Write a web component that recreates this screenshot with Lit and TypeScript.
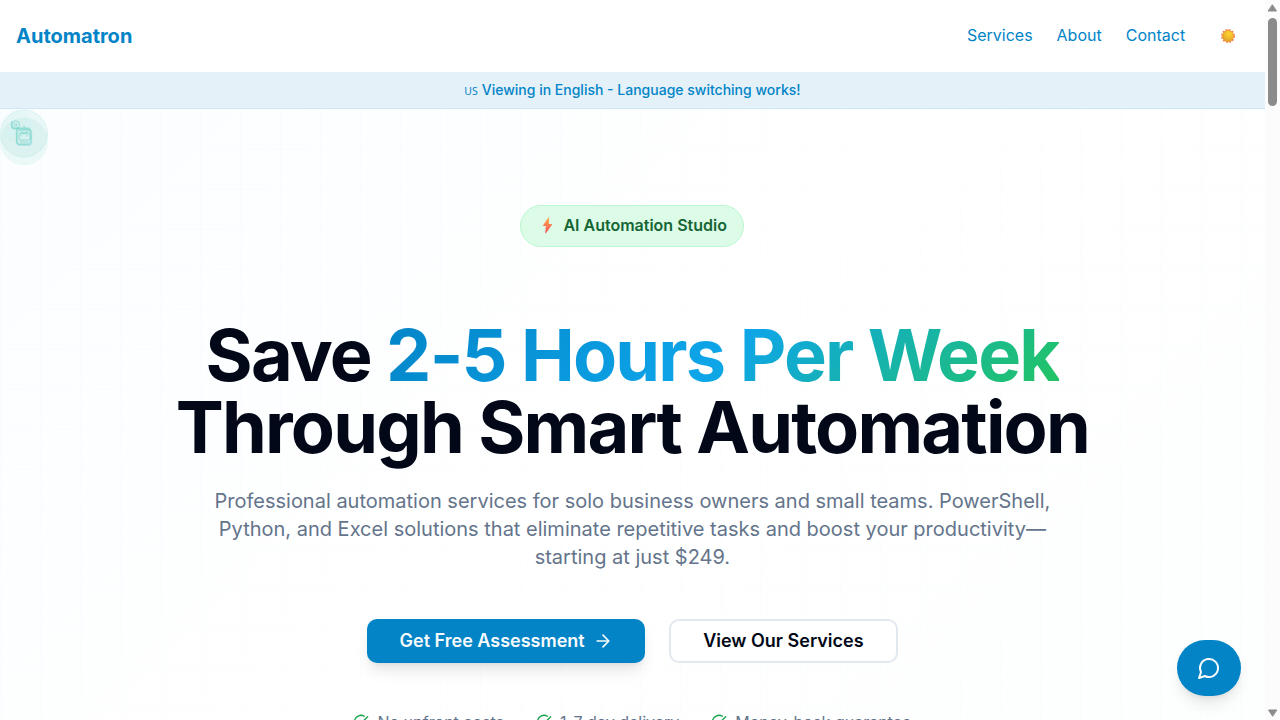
import { LitElement, html, css } from "lit";
import { customElement } from "lit/decorators.js";

@customElement("app-root")
export class AppRoot extends LitElement {
  static styles = css`
    :host { display: flex; width: 1280px; height: 720px; overflow: hidden; background: #fff; color: #020817; font-family: Inter, sans-serif; font-size: 16px; line-height: 24px; }
    * { box-sizing: border-box; }
    svg { display: block; fill: none; stroke: currentColor; stroke-width: 2; stroke-linecap: round; stroke-linejoin: round; flex: none; }
    .page { width: 1264.8px; height: 720px; flex: none; position: relative; display: flex; flex-direction: column; overflow: hidden; }
    .nav { height: 72px; flex: none; display: flex; align-items: center; justify-content: space-between; padding: 0 28.4px 0 16px; color: #0284c7; }
    .brand { font-weight: 700; font-size: 20px; line-height: 28px; }
    .links { display: flex; align-items: center; gap: 24px; }
    .links span { padding-bottom: 2px; }
    .sun { margin-left: 11.3px; width: 16px; height: 16px; stroke: none; }
    .notice { height: 37px; flex: none; background: #e4f1f9; border-bottom: 1px solid #cfe8f7; display: flex; align-items: center; justify-content: center; gap: 4px; color: #0284c7; font-weight: 500; font-size: 14px; line-height: 20px; }
    .flag { font-family: "Noto Sans", sans-serif; font-size: 10.5px; font-weight: 400; padding-top: 1px; }
    .hero { position: relative; flex: 1; display: flex; flex-direction: column; align-items: center; padding-top: 96px; background-image: linear-gradient(to right, rgba(2,132,199,.012) 1px, transparent 1px), linear-gradient(to bottom, rgba(2,132,199,.012) 1px, transparent 1px), linear-gradient(135deg, #fbfdff, #fff 50%, #fdfefe); background-size: 40px 40px, 40px 40px, auto; }
    .badge { width: 224px; height: 42px; flex: none; border: 1px solid #bbf7d0; border-radius: 21px; background: #dcfce7; display: flex; align-items: center; padding: 0 15px 2px 18px; gap: 8px; font-weight: 600; color: #166534; white-space: nowrap; }
    .bolt { width: 16px; height: 18px; stroke: none; }
    h1 { margin: 72px 0 0; font-size: 72px; line-height: 72px; font-weight: 700; letter-spacing: -1.8px; text-align: center; white-space: nowrap; }
    .grad { background: linear-gradient(135deg, #0284c7, #0ea5e9 50%, #22c55e); -webkit-background-clip: text; background-clip: text; color: transparent; }
    .lead { margin: 24px 0 0; font-size: 20px; line-height: 28px; color: #64748b; text-align: center; white-space: nowrap; }
    .actions { display: flex; gap: 24px; margin-top: 48px; height: 44px; align-items: center; flex: none; font-size: 18px; line-height: 28px; white-space: nowrap; }
    .primary { width: 278px; height: 44px; border-radius: 10px; background: #0284c7; color: #f8fafc; font-weight: 600; display: flex; align-items: center; justify-content: center; gap: 8px; box-shadow: 0 10px 15px -3px rgba(0,0,0,.1), 0 4px 6px -4px rgba(0,0,0,.1); }
    .secondary { width: 228.5px; height: 44px; border: 2px solid #e2e8f0; border-radius: 10px; background: #fff; font-weight: 600; display: flex; align-items: center; justify-content: center; }
    .perks { display: flex; gap: 32px; margin-top: 47px; color: #64748b; white-space: nowrap; }
    .perk { display: flex; align-items: center; gap: 8px; }
    .perk svg { color: #16a34a; }
    .orb { position: absolute; left: 0; top: 0; }
    .chat { position: absolute; left: 1177px; top: 640px; width: 64px; height: 56px; border-radius: 28px; background: #0284c7; color: #f8fafc; display: flex; align-items: center; justify-content: center; box-shadow: 0 10px 15px -3px rgba(0,0,0,.1), 0 4px 6px -4px rgba(0,0,0,.1); }
    .bar { width: 15.2px; height: 720px; background: #fcfcfc; display: flex; flex-direction: column; align-items: center; }
    .bar svg { fill: #8b8b8b; stroke: #8b8b8b; stroke-width: 1; }
    .up { margin-top: 4px; }
    .thumb { width: 9px; height: 88px; border-radius: 5px; background: #8b8b8b; margin-top: 6px; }
    .down { margin-top: auto; margin-bottom: 3px; }
  `;

  perk(text: string) {
    return html`<div class="perk"><svg width="16" height="16" viewBox="0 0 24 24"><path d="M21.801 10A10 10 0 1 1 17 3.335"/><path d="m9 11 3 3L22 4"/></svg><span>${text}</span></div>`;
  }

  render() {
    return html`
      <div class="page">
        <header class="nav">
          <div class="brand">Automatron</div>
          <nav class="links"><span>Services</span><span>About</span><span>Contact</span>
            <svg class="sun" viewBox="0 0 16 16"><defs><radialGradient id="s" cx=".6" cy=".3" r=".75"><stop offset="0" stop-color="#ffd52e"/><stop offset="1" stop-color="#dda02b"/></radialGradient></defs><circle cx="8" cy="8" r="6.2" fill="none" stroke="#f37c35" stroke-width="1.5" stroke-linecap="butt" stroke-dasharray="1.8 1.45"/><circle cx="8" cy="8" r="5.9" fill="#f28a32"/><circle cx="8" cy="8" r="5.4" fill="url(#s)"/></svg>
          </nav>
        </header>
        <div class="notice"><span class="flag">US</span><span>Viewing in English - Language switching works!</span></div>
        <main class="hero">
          <svg class="orb" width="50" height="60" viewBox="0 0 50 60" stroke-width="1">
            <circle cx="24" cy="32.5" r="24" fill="#22b5a0" fill-opacity=".07" stroke="none"/>
            <circle cx="24" cy="24.5" r="23.5" fill="#14a8a0" fill-opacity=".07" stroke="#14b8a6" stroke-opacity=".1" stroke-width="1"/>
            <circle cx="16" cy="17" r="16" fill="#14b8a6" fill-opacity=".02" stroke="none"/>
            <g stroke="#2dbfb0" stroke-opacity=".28" stroke-width="1.4"><circle cx="15.5" cy="16" r="4" stroke-dasharray="2 1"/><circle cx="15.5" cy="16" r="1.4"/><path d="M12 13v6h6"/><rect x="17" y="21" width="14.5" height="15" rx="3"/><rect x="16.5" y="19" width="14" height="16" rx="3"/><rect x="19" y="24" width="11" height="7" rx="2"/><path d="M24 17v4M19 20h10M21 25v2M27 25v2M20 33h8M21 22l3 3 4-3"/></g>
          </svg>
          <div class="badge"><svg class="bolt" viewBox="0 0 16 18"><defs><linearGradient id="b" x1="0" y1="0" x2="0" y2="1"><stop offset="0" stop-color="#ffab45"/><stop offset="1" stop-color="#f4505c"/></linearGradient></defs><path fill="url(#b)" d="M9.3 1.5 4 9.4q-.3.7.4.7h2.5L6.2 17q.2.9.9.1l5.9-8.3q.3-.9-.5-.9H9.9V2q0-.9-.6-.5Z"/></svg><span>AI Automation Studio</span></div>
          <h1>Save <span class="grad">2-5 Hours Per Week</span><br>Through Smart Automation</h1>
          <p class="lead">Professional automation services for solo business owners and small teams. PowerShell,<br>Python, and Excel solutions that eliminate repetitive tasks and boost your productivity—<br>starting at just $249.</p>
          <div class="actions">
            <div class="primary"><span>Get Free Assessment</span><svg width="20" height="20" viewBox="0 0 24 24"><path d="M5 12h14M12 5l7 7-7 7"/></svg></div>
            <div class="secondary">View Our Services</div>
          </div>
          <div class="perks">${this.perk("No upfront costs")}${this.perk("1-7 day delivery")}${this.perk("Money-back guarantee")}</div>
        </main>
        <div class="chat"><svg width="24" height="24" viewBox="0 0 24 24"><path d="M7.9 20A9 9 0 1 0 4 16.1L2 22Z"/></svg></div>
      </div>
      <div class="bar"><svg class="up" width="11" height="8" viewBox="0 0 11 8"><path d="m5.5 1 4 6h-8Z"/></svg><div class="thumb"></div><svg class="down" width="11" height="8" viewBox="0 0 11 8"><path d="m5.5 7-4-6h8Z"/></svg></div>
    `;
  }
}
